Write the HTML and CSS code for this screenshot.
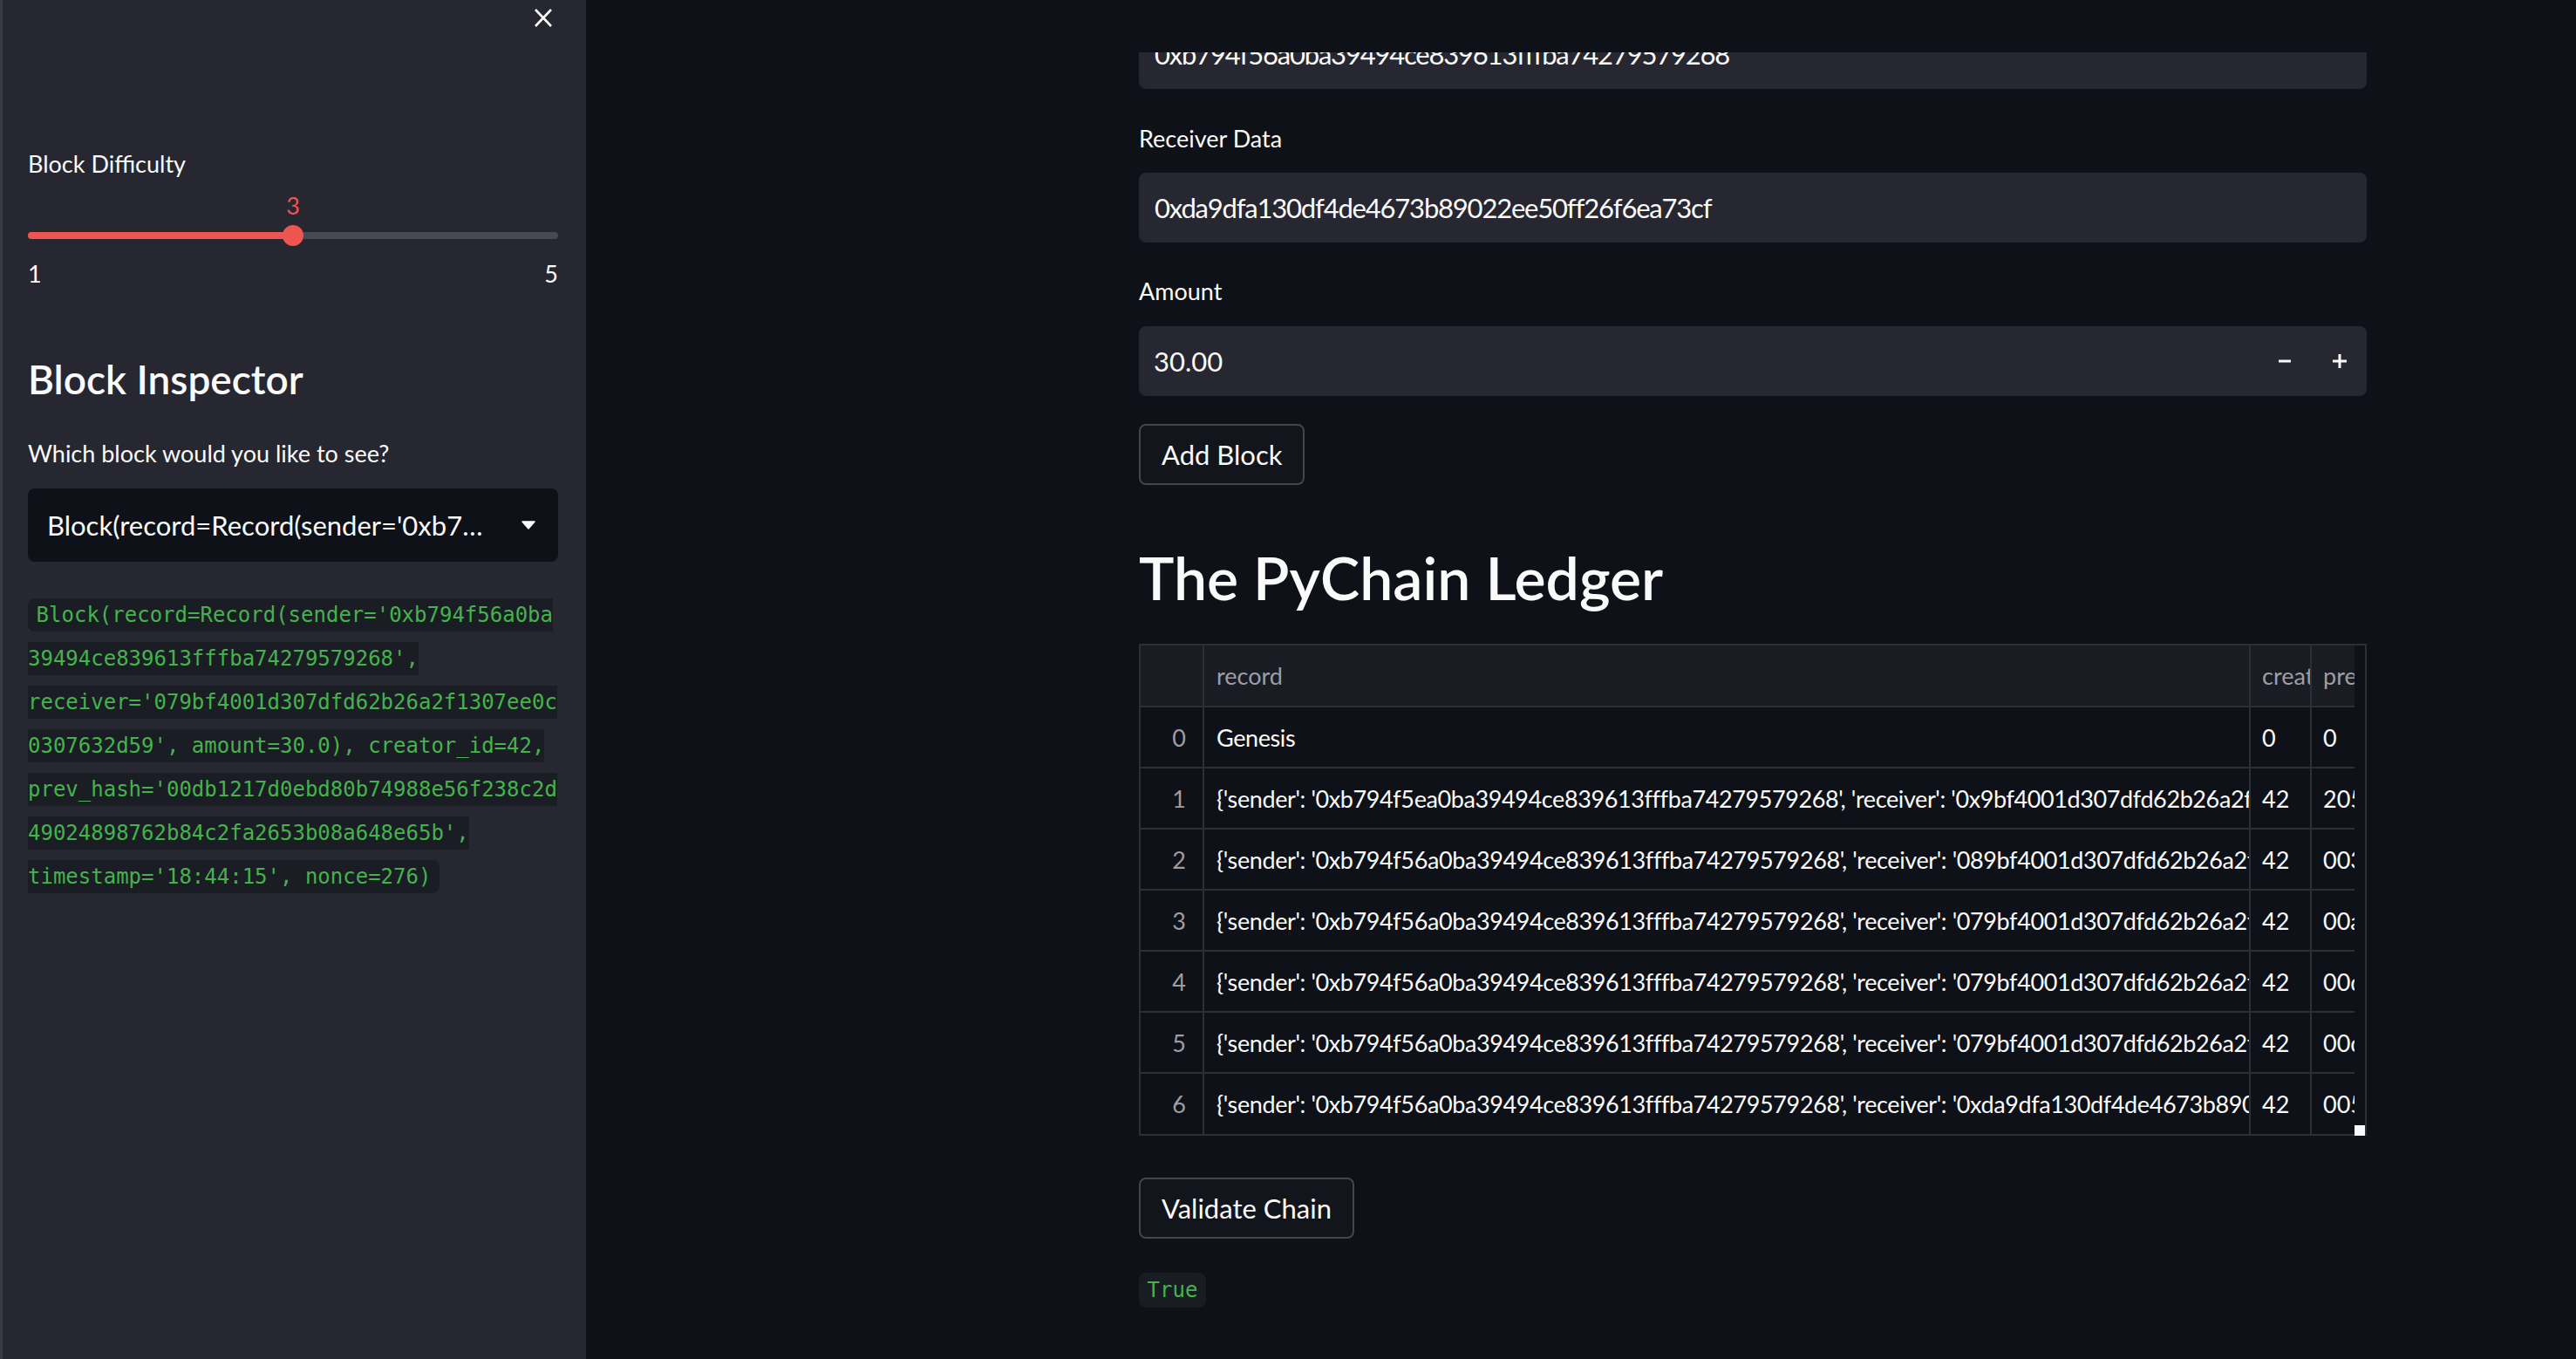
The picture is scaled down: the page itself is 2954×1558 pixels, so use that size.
FILE: index.html
```html
<!DOCTYPE html>
<html lang="en">
<head>
<meta charset="utf-8">
<title>PyChain</title>
<link rel="stylesheet" href="styles.css">
</head>
<body>
<aside class="sidebar">
  <div class="sb-top">
    <button class="close-btn" aria-label="Close sidebar">
      <svg width="24" height="24" viewBox="0 0 24 24"><path d="M3 2 L21 21 M21 2 L3 21" stroke="#fafafa" stroke-width="2.6" fill="none"/></svg>
    </button>
  </div>
  <div class="label label-difficulty">Block Difficulty</div>
  <div class="slider">
    <div class="slider-value-row"><span class="slider-value" style="left:50%">3</span></div>
    <div class="slider-track-row">
      <div class="slider-track">
        <div class="slider-fill" style="width:50%"></div>
        <div class="slider-thumb" style="left:50%"></div>
      </div>
    </div>
    <div class="slider-minmax"><span>1</span><span>5</span></div>
  </div>
  <h2 class="sb-heading">Block Inspector</h2>
  <div class="label label-which">Which block would you like to see?</div>
  <div class="select">
    <span class="select-value">Block(record=Record(sender='0xb7…</span>
    <svg class="caret" width="16" height="10" viewBox="0 0 16 10"><path d="M1 1 L15 1 L8 9 Z" fill="#fafafa" stroke="#fafafa" stroke-width="1.5" stroke-linejoin="round"/></svg>
  </div>
  <p class="sb-code"><code class="code">Block(record=Record(sender='0xb794f56a0ba39494ce839613fffba74279579268', receiver='079bf4001d307dfd62b26a2f1307ee0c0307632d59', amount=30.0), creator_id=42, prev_hash='00db1217d0ebd80b74988e56f238c2d49024898762b84c2fa2653b08a648e65b', timestamp='18:44:15', nonce=276)</code></p>
</aside>

<main class="main">
  <header class="app-header"></header>
  <div class="block">
    <div class="input input-first hex">0xb794f56a0ba39494ce839613fffba74279579268</div>

    <div class="label label-receiver">Receiver Data</div>
    <div class="input input-receiver hex">0xda9dfa130df4de4673b89022ee50ff26f6ea73cf</div>

    <div class="label label-amount">Amount</div>
    <div class="input number-input">
      <span class="number-value">30.00</span>
      <span class="step-btn"><svg width="18" height="18" viewBox="0 0 18 18"><path d="M1 9 H15" stroke="#fafafa" stroke-width="3"/></svg></span>
      <span class="step-btn"><svg width="18" height="18" viewBox="0 0 18 18"><path d="M1 9 H17 M9 1 V17" stroke="#fafafa" stroke-width="3"/></svg></span>
    </div>

    <button class="btn btn-add">Add Block</button>

    <h2 class="title">The PyChain Ledger</h2>

    <div class="grid-frame">
      <div class="grid-clip">
        <table class="grid">
          <colgroup>
            <col class="c-idx"><col class="c-record"><col class="c-creator"><col class="c-prev">
          </colgroup>
          <thead>
            <tr><th class="idx"></th><th>record</th><th>creator_id</th><th>prev_hash</th></tr>
          </thead>
          <tbody>
            <tr><td class="idx">0</td><td>Genesis</td><td>0</td><td>0</td></tr>
            <tr><td class="idx">1</td><td>{'sender': '0xb794f5ea0ba39494ce839613fffba74279579268', 'receiver': '0x9bf4001d307dfd62b26a2f1307ee0c0307632d59', 'amount': 10.0}</td><td>42</td><td>2059c1b1f9c44cc5e2a8b2c5</td></tr>
            <tr><td class="idx">2</td><td>{'sender': '0xb794f56a0ba39494ce839613fffba74279579268', 'receiver': '089bf4001d307dfd62b26a2f1307ee0c0307632d59', 'amount': 20.0}</td><td>42</td><td>0031d5a97e2f08c4b6a1</td></tr>
            <tr><td class="idx">3</td><td>{'sender': '0xb794f56a0ba39494ce839613fffba74279579268', 'receiver': '079bf4001d307dfd62b26a2f1307ee0c0307632d59', 'amount': 30.0}</td><td>42</td><td>00a4f2c81d6e93b07a52</td></tr>
            <tr><td class="idx">4</td><td>{'sender': '0xb794f56a0ba39494ce839613fffba74279579268', 'receiver': '079bf4001d307dfd62b26a2f1307ee0c0307632d59', 'amount': 30.0}</td><td>42</td><td>00d1b27c4e90a3f618e5</td></tr>
            <tr><td class="idx">5</td><td>{'sender': '0xb794f56a0ba39494ce839613fffba74279579268', 'receiver': '079bf4001d307dfd62b26a2f1307ee0c0307632d59', 'amount': 30.0}</td><td>42</td><td>00db1217d0ebd80b74988e56</td></tr>
            <tr class="last"><td class="idx">6</td><td>{'sender': '0xb794f56a0ba39494ce839613fffba74279579268', 'receiver': '0xda9dfa130df4de4673b89022ee50ff26f6ea73cf', 'amount': 30.0}</td><td>42</td><td>005e8a3c71f2d904b6c1</td></tr>
          </tbody>
        </table>
      </div>
      <div class="grid-gutter"></div>
      <span class="grid-resize"></span>
    </div>

    <button class="btn btn-validate">Validate Chain</button>

    <code class="true-code">True</code>
  </div>
</main>
</body>
</html>
```

FILE: styles.css
```css
* {
  box-sizing: border-box;
}

html,
body {
  margin: 0;
  padding: 0;
}

body {
  display: flex;
  width: 2954px;
  height: 1558px;
  overflow: hidden;
  background: #0e1117;
  color: #fafafa;
  font-family: Lato, "Noto Sans", sans-serif;
}

/* ---------- Sidebar ---------- */
.sidebar {
  flex: 0 0 672px;
  width: 672px;
  min-width: 0;
  height: 1558px;
  overflow: hidden;
  background: #262730;
  border-left: 3px solid #393a42;
  padding: 0 32px 0 29px;
  display: flex;
  flex-direction: column;
}

.sb-top {
  height: 41px;
  display: flex;
  justify-content: flex-end;
  align-items: center;
  padding-right: 5px;
}

.close-btn {
  width: 24px;
  height: 24px;
  padding: 0;
  border: 0;
  background: none;
  display: flex;
}

.label {
  font-size: 27px;
  line-height: 40px;
  height: 40px;
  white-space: nowrap;
}

.label-difficulty {
  margin-top: 127px;
}

.slider-value-row {
  position: relative;
  height: 40px;
  margin-top: 8px;
}

.slider-value {
  position: absolute;
  top: 0;
  transform: translateX(-50%);
  color: #ec5550;
  font-size: 27px;
  line-height: 40px;
}

.slider-track-row {
  height: 24px;
  margin-top: 2px;
  display: flex;
  align-items: center;
}

.slider-track {
  position: relative;
  width: 100%;
  height: 8px;
  border-radius: 4px;
  background: #484955;
}

.slider-fill {
  height: 100%;
  border-radius: 4px;
  background: #ec5550;
}

.slider-thumb {
  position: absolute;
  top: 50%;
  width: 24px;
  height: 24px;
  border-radius: 50%;
  background: #ec5550;
  transform: translate(-50%, -50%);
}

.slider-minmax {
  margin-top: 12px;
  display: flex;
  justify-content: space-between;
  font-size: 27px;
  line-height: 40px;
  height: 40px;
}

.sb-heading {
  margin: 71px 0 0;
  font-size: 46px;
  line-height: 60px;
  height: 60px;
  font-weight: 600;
}

.label-which {
  margin-top: 35px;
}

.select {
  margin-top: 20px;
  height: 84px;
  background: #0e1117;
  border-radius: 8px;
  display: flex;
  align-items: center;
  padding: 0 26px 0 22px;
}

.select-value {
  flex: 1;
  min-width: 0;
  font-size: 31px;
  white-space: nowrap;
  overflow: hidden;
  text-overflow: ellipsis;
  padding-right: 30px;
}

.caret {
  flex: none;
}

.sb-code {
  width: 608px;
  margin: 36px 0 0;
  font-family: "DejaVu Sans Mono", monospace;
  font-size: 24px;
  line-height: 50px;
  overflow-wrap: anywhere;
}

.code {
  font-family: "DejaVu Sans Mono", monospace;
  font-size: 24px;
  color: #45b34c;
  background: #1b1d25;
  padding: 4.8px 9.6px;
  border-radius: 8px;
}

/* ---------- Main ---------- */
.main {
  flex: 1 1 auto;
  min-width: 0;
  position: relative;
  height: 1558px;
  padding-left: 634px;
  overflow: hidden;
}

.app-header {
  position: absolute;
  top: 0;
  left: 0;
  right: 0;
  height: 60px;
  background: #0e1117;
  z-index: 2;
}

.block {
  width: 1408px;
  padding-top: 22px;
  display: flex;
  flex-direction: column;
  align-items: flex-start;
}

.input {
  width: 100%;
  height: 80px;
  background: #262730;
  border-radius: 8px;
  padding: 0 18px;
  font-size: 31px;
  line-height: 80px;
  white-space: nowrap;
  overflow: hidden;
}

.hex {
  letter-spacing: -1.2px;
}

.label-receiver {
  margin-top: 37px;
}

.input-receiver {
  margin-top: 19px;
}

.label-amount {
  margin-top: 36px;
}

.number-input {
  margin-top: 20px;
  display: flex;
  align-items: center;
  padding-right: 0;
  padding-left: 17px;
}

.number-value {
  flex: 1;
}

.step-btn {
  width: 62px;
  height: 80px;
  display: flex;
  align-items: center;
  justify-content: center;
}

.btn {
  height: 70px;
  padding: 0 24px;
  border: 2px solid #44464d;
  border-radius: 8px;
  background: #12151c;
  color: #fafafa;
  font-family: Lato, "Noto Sans", sans-serif;
  font-size: 31px;
  line-height: 1;
}

.btn-add {
  margin-top: 32px;
}

.title {
  margin: 61px 0 0;
  font-size: 68px;
  line-height: 90px;
  height: 90px;
  font-weight: 600;
  white-space: nowrap;
}

/* ---------- Data grid ---------- */
.grid-frame {
  position: relative;
  width: 100%;
  height: 564px;
  margin-top: 31px;
  border: 2px solid #2d2f36;
  display: flex;
}

.grid-clip {
  flex: 1;
  min-width: 0;
  overflow: hidden;
}

.grid-gutter {
  flex: 0 0 12px;
}

.grid-resize {
  position: absolute;
  right: 0;
  bottom: -2px;
  width: 12px;
  height: 12px;
  background: #fafafa;
}

.grid {
  border-collapse: separate;
  border-spacing: 0;
  table-layout: fixed;
  width: 1643px;
  font-size: 27px;
}

.c-idx {
  width: 73px;
}

.c-record {
  width: 1200px;
}

.c-creator {
  width: 70px;
}

.c-prev {
  width: 300px;
}

.grid th,
.grid td {
  height: 70px;
  padding: 0 8px 0 14px;
  border-right: 2px solid #2d2f36;
  border-bottom: 2px solid #2d2f36;
  white-space: nowrap;
  overflow: hidden;
  text-align: left;
  vertical-align: middle;
  font-weight: 400;
}

.grid td:nth-child(2) {
  letter-spacing: -0.4px;
  padding-right: 0;
}

.grid td:nth-child(3),
.grid th:nth-child(3),
.grid td:nth-child(4),
.grid th:nth-child(4) {
  padding-left: 13px;
  padding-right: 0;
  text-overflow: clip;
}

.grid th {
  height: 71px;
  background: #1a1c24;
  color: #9d9ea4;
}

.grid .idx {
  text-align: right;
  padding: 0 19px 0 0;
  color: #9d9ea4;
}

.grid tr.last td {
  height: 69px;
  border-bottom: 0;
}

.btn-validate {
  margin-top: 48px;
}

.true-code {
  margin-top: 39px;
  height: 40px;
  display: inline-flex;
  align-items: center;
  padding: 0 9.6px;
  background: #1a1c23;
  border-radius: 8px;
  font-family: "DejaVu Sans Mono", monospace;
  font-size: 24px;
  color: #45b34c;
}
```
